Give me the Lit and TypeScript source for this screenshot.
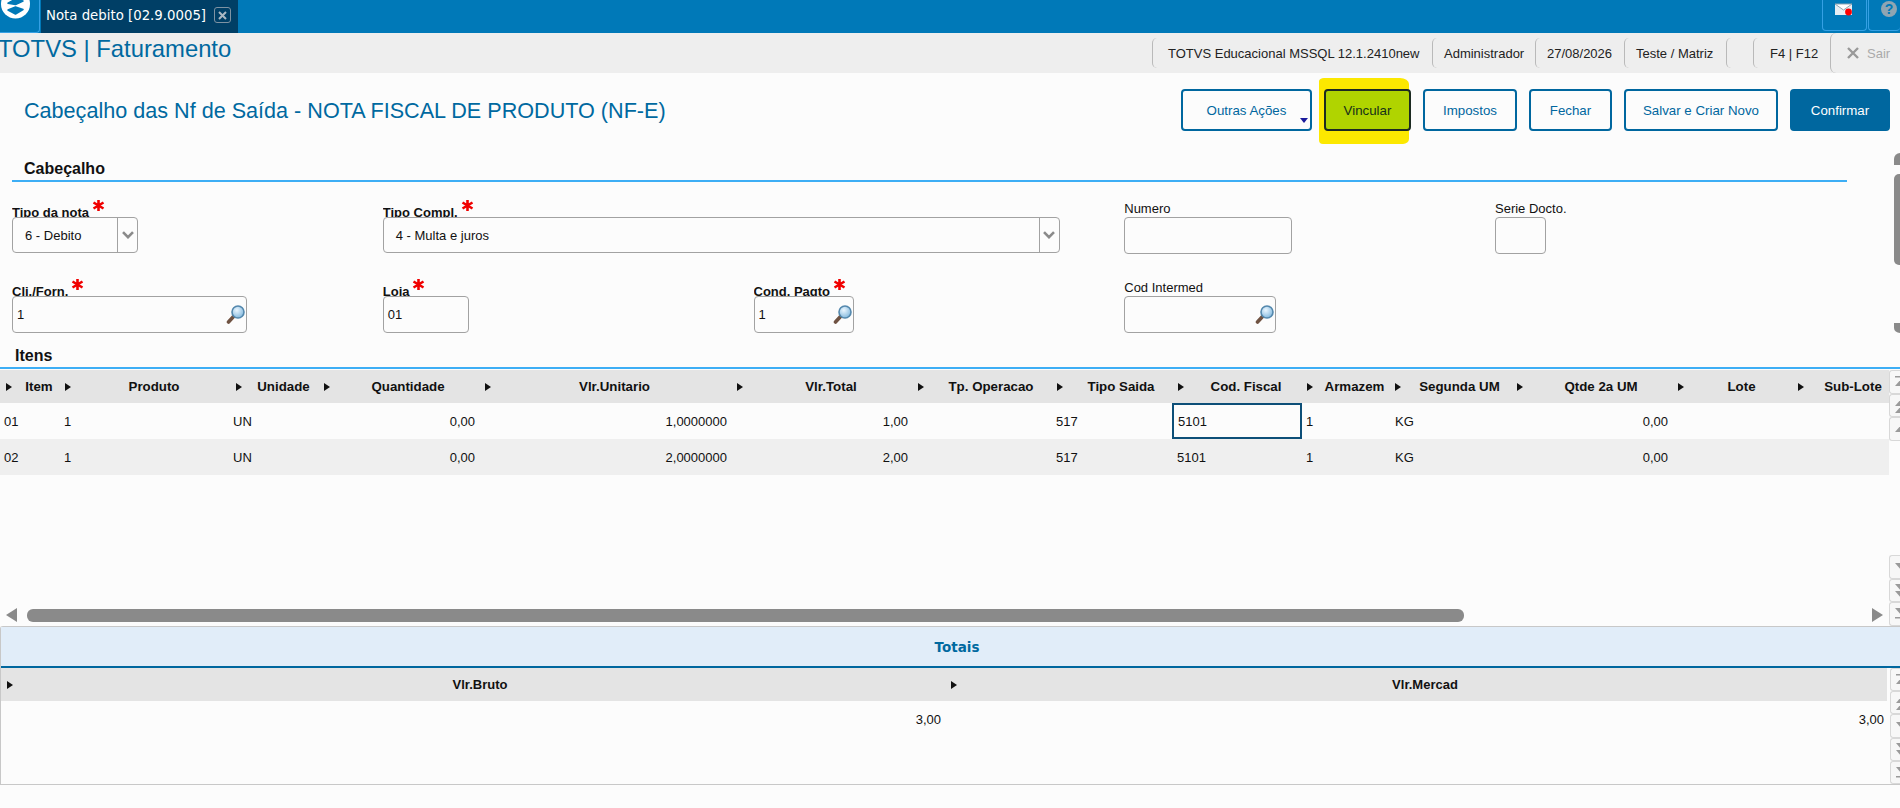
import { LitElement, html, css, svg } from "lit";
import { customElement } from "lit/decorators.js";

const HEAD = ["Item","Produto","Unidade","Quantidade","Vlr.Unitario","Vlr.Total","Tp. Operacao","Tipo Saida","Cod. Fiscal","Armazem","Segunda UM","Qtde 2a UM","Lote","Sub-Lote"];
const RIGHT = new Set([3,4,5,11]);
const ROWS = [
  ["01","1","UN","0,00","1,0000000","1,00","","517","5101","1","KG","0,00","",""],
  ["02","1","UN","0,00","2,0000000","2,00","","517","5101","1","KG","0,00","",""],
];

const tri = (y: number, up: boolean) =>
  up ? svg`<path d="M11 ${y}l6 7h-12z"/>` : svg`<path d="M5 ${y}h12l-6 7z"/>`;

const scrollBtn = (kind: string) => html`<div class="sbtn"><svg width="11" height="23" viewBox="0 0 11 23" fill="#9a9a9a">
  ${kind === "top" ? svg`<path d="M5 6h12v1.5h-12z"/>${tri(9, true)}` : ""}
  ${kind === "up2" ? svg`${tri(5, true)}${tri(12, true)}` : ""}
  ${kind === "up" ? svg`${tri(8, true)}` : ""}
  ${kind === "down" ? svg`${tri(8, false)}` : ""}
  ${kind === "down2" ? svg`${tri(5, false)}${tri(12, false)}` : ""}
  ${kind === "bottom" ? svg`${tri(6, false)}<path d="M5 15h12v1.5h-12z"/>` : ""}
</svg></div>`;

const lens = html`<svg class="lens" width="20" height="20" viewBox="0 0 20 20">
  <defs><radialGradient id="g" cx="40%" cy="35%" r="70%"><stop offset="0" stop-color="#eaf6ff"/><stop offset="1" stop-color="#7fb6dc"/></radialGradient></defs>
  <path d="M8 11L2.5 17" stroke="#6f5242" stroke-width="3.6" stroke-linecap="round"/>
  <circle cx="12" cy="7" r="6" fill="url(#g)" stroke="#5488ad" stroke-width="1.6"/>
</svg>`;

const star = html`<svg class="star" width="13" height="11" viewBox="0 0 13 11" fill="none" stroke="#f00000" stroke-width="2.6">
  <path d="M6.5 0v11M1.5 2.5l10 6M11.5 2.5l-10 6"/></svg>`;

const chev = html`<div class="chev"><svg width="12" height="8" viewBox="0 0 12 8" fill="none" stroke="#8a8a8a" stroke-width="2.6"><path d="M1 1.2l5 5 5-5"/></svg></div>`;

@customElement("app-root")
export class AppRoot extends LitElement {
  static styles = css`
    :host { display: block; width: 1900px; height: 808px; overflow: hidden; background: #fcfcfc;
      font-family: "Liberation Sans", Arial, sans-serif; font-size: 13px; color: #111; }
    .topbar { height: 33px; background: #0079b8; display: flex; }
    .logo { width: 39px; height: 32px; border-right: 1px solid #35a0e4; border-bottom: 1px solid #35a0e4; border-bottom-right-radius: 4px; overflow: hidden; }
    .logo svg { display: block; }
    .tab { width: 197px; margin-left: 1px; background: #003f66; color: #fff; display: flex; align-items: center;
      font: 13.3px "DejaVu Sans", sans-serif; padding: 0 0 3px 5px; box-sizing: border-box; gap: 8px; white-space: nowrap; }
    .close { width: 15px; height: 14px; flex: none; border: 1px solid #7f93a3; border-radius: 3px; display: flex; align-items: center; justify-content: center; }
    .spacer { flex: 1; }
    .tbtn { height: 31px; border: 1px solid #35a0e4; border-top: 0; border-radius: 0 0 4px 4px; box-sizing: border-box; overflow: hidden; }
    .mail { width: 45px; padding: 3px 0 0 12px; }
    .help { width: 32px; margin-left: 1px; padding: 1px 0 0 12px; border-right: 0; }
    .qm { width: 16px; height: 16px; border-radius: 50%; background: #8fa5b2; color: #0079b8; font: bold 14px/16px "Liberation Sans", sans-serif; text-align: center; }

    .head { height: 40px; background: #eeeeee; display: flex; align-items: center; }
    .brand { font-size: 23.8px; color: #0069a0; margin-left: -2px; margin-top: -8px; white-space: nowrap; }
    .status { margin-left: auto; display: flex; height: 40px; align-items: center; }
    .st { height: 30px; border-left: 1px solid #b9b9b9; border-radius: 5px 0 0 5px; box-sizing: border-box; padding-left: 11px;
      display: flex; align-items: center; white-space: nowrap; color: #222; }
    .st.sair { height: 40px; width: 70px; padding-left: 16px; color: #aaa; gap: 8px; border-radius: 6px 0 0 6px; }
    .w1 { width: 280px; padding-left: 15px; } .w2 { width: 103px; } .w3 { width: 89px; } .w4 { width: 102px; } .w5 { width: 27px; } .w6 { width: 77px; padding-left: 16px; }

    .titlerow { height: 80px; display: flex; box-sizing: border-box; padding: 16px 10px 0 24px; }
    .title { font-size: 21.6px; color: #0069a0; margin-top: 9px; white-space: nowrap; }
    .btns { margin-left: auto; display: flex; gap: 12px; height: 42px; font-size: 13.3px; }
    .btn { box-sizing: border-box; height: 42px; border: 2px solid #00679f; border-radius: 4px; color: #00679f; background: #fcfcfc;
      display: flex; align-items: center; justify-content: center; position: relative; }
    .btn.primary { background: #00679f; color: #fff; width: 100px; }
    .btn.vinc { background: #b0d400; border-color: #1c2a22; color: #15301a; width: 87px; z-index: 1; }
    .caret { position: absolute; right: 2px; bottom: 6px; width: 0; height: 0; border-left: 4.5px solid transparent; border-right: 4.5px solid transparent; border-top: 5px solid #1a1a9c; }
    .w131 { width: 131px; } .w94 { width: 94px; } .w83 { width: 83px; } .w154 { width: 154px; }
    .vwrap { position: relative; }
    .mark { position: absolute; left: -5px; top: -11px; width: 90px; height: 66px; background: #fce800; border-radius: 5px 9px 6px 4px / 3px 6px 5px 4px; }

    .upper { display: flex; height: 180px; }
    .umain { width: 1847px; padding-top: 7px; }
    .vbar { margin-left: auto; width: 6px; height: 180px; display: flex; flex-direction: column; overflow: hidden; }
    .vthumb { width: 6px; height: 91px; margin-top: 9px; background: #8a8a8a; border-radius: 5px 0 0 5px; }
    .varrow { width: 12px; height: 12px; background: #8a8a8a; border-radius: 50% 0 0 0; }
    .varrow.b { height: 10px; margin-top: 58px; border-radius: 0 0 0 50%; }
    .sec { font-weight: bold; font-size: 16px; line-height: 18px; height: 20px; border-bottom: 2px solid #3daef5; }
    .sec.c { margin-left: 12px; padding-left: 12px; }
    .form { display: grid; grid-template-columns: repeat(5, 370.75px); padding: 16px 0 0 12px; row-gap: 23px; }
    .span2 { grid-column: span 2; }
    .lab { height: 19px; display: flex; overflow: hidden; white-space: nowrap; align-items: flex-start; line-height: 14px; }
    .lab .t { padding-top: 4px; }
    .lab.req { font-weight: bold; }
    .lab.req .t { padding-top: 8px; }
    .star { margin: 2px 0 0 3px; flex: none; }
    .box { box-sizing: border-box; height: 37px; border: 1px solid #a2a2a2; border-radius: 4px; display: flex; align-items: center; background: #fcfcfc; padding-left: 4px; }
    .box.sel { height: 36px; padding-left: 0; }
    .box.sel .v { flex: 1; padding-left: 12px; }
    .box .v { flex: 1; }
    .chev { width: 19px; height: 100%; border-left: 1px solid #a2a2a2; display: flex; align-items: center; justify-content: center; }
    .lens { margin-right: 0; flex: none; }
    .f125 { width: 126px; } .f677 { width: 677px; } .f167 { width: 168px; } .f51 { width: 51px; }
    .f234 { width: 235px; } .f86 { width: 86px; } .f100 { width: 100px; } .f151 { width: 152px; }

    .itens { height: 36px; }
    .sec.i { padding: 13px 0 0 15px; height: 21px; line-height: 20px; }
    .area { display: flex; margin-top: 1px; height: 256px; }
    .amain { width: 1889px; display: flex; flex-direction: column; }
    .side { width: 11px; display: flex; flex-direction: column; overflow: hidden; }
    .side.sb { justify-content: space-between; }
    .sgroup { display: flex; flex-direction: column; }
    .sbtn { height: 23.7px; box-sizing: border-box; border: 1px solid #d8d8d8; border-right: 0; border-radius: 3px 0 0 3px; background: #f7f7f7; overflow: hidden; }
    .sbtn svg { display: block; margin-top: -1px; }
    .grid { flex: 1; overflow: hidden; }
    .tr { display: grid; grid-template-columns: 63px 171px 88px 161px 252px 181px 139px 121px 129px 88px 122px 161px 120px 103px; height: 36px; align-items: center; }
    .tr.h { height: 33px; background: #e4e4e4; font-weight: bold; font-size: 13.3px; }
    .tr.alt { background: #efefef; }
    .hc { display: flex; align-items: center; padding-left: 2px; white-space: nowrap; }
    .hc:first-child { padding-left: 6px; }
    .hc .n { flex: 1; text-align: center; padding-left: 3px; }
    .ar { flex: none; width: 0; height: 0; border-top: 4px solid transparent; border-bottom: 4px solid transparent; border-left: 6px solid #111; }
    .td { padding-left: 1px; white-space: nowrap; }
    .td:first-child { padding-left: 4px; }
    .td.r { text-align: right; padding: 0 8px 0 0; }
    .td:nth-child(3) { margin-left: -2px; }
    .td:nth-child(11) { padding-left: 2px; }
    .td.cur { margin: 0 3px 0 -4px; padding-left: 4px; height: 36px; box-sizing: border-box; border: 2px solid #0d4f78; line-height: 33px; }
    .hs { height: 22px; display: flex; align-items: center; }
    .la { width: 0; height: 0; margin-left: 6px; border-top: 7px solid transparent; border-bottom: 7px solid transparent; border-right: 11px solid #8a8a8a; }
    .hthumb { width: 1437px; height: 13px; margin-left: 10px; background: #8a8a8a; border-radius: 6px; }
    .ra { width: 0; height: 0; margin-left: auto; margin-right: 6px; border-top: 7px solid transparent; border-bottom: 7px solid transparent; border-left: 11px solid #8a8a8a; }

    .totais { height: 159px; box-sizing: border-box; border: 1px solid #c8c8c8; border-width: 1px 0 1px 1px; border-radius: 3px 0 0 0; }
    .tt { height: 39px; background: #e1edf9; border-bottom: 2px solid #00679f; font: bold 13.5px/40px "DejaVu Sans", sans-serif; color: #0069a0; text-align: center; padding-left: 13px; }
    .tbody { display: flex; }
    .tmain { width: 1886px; }
    .tside { margin-left: 3px; width: 10px; overflow: hidden; }
    .tside .sbtn { height: 23.2px; }
    .tr2 { display: grid; grid-template-columns: 948px 938px; height: 36px; align-items: center; }
    .tr2.h { height: 33px; background: #e4e4e4; font-weight: bold; }
    .tr2 .hc { padding-left: 6px; }
    .tr2 .hc .n { padding: 0 2px 0 0; }
    .tr2 .hc + .hc { padding-left: 2px; }
    .tr2 .hc + .hc .n { padding: 0 0 0 6px; }
    .tr2 .td.r { padding-right: 8px; margin: 0; }
    .tr2 .td:nth-child(2) { padding-right: 3px; }
  `;

  render() {
    return html`
      <div class="topbar">
        <div class="logo"><svg width="39" height="32" viewBox="0 0 39 32">
          <circle cx="15.5" cy="4" r="14.5" fill="#fff"/>
          <path d="M8 10L15.5 7l7.5 2.5-7.5 4.5z" fill="#0079b8" stroke="#0079b8" stroke-width="1.5" stroke-linejoin="round"/>
          <path d="M8 3.2L15.5 -1l7.5 2-7.5 3.6z" fill="#0079b8" stroke="#0079b8" stroke-width="1.5" stroke-linejoin="round"/>
        </svg></div>
        <div class="tab">Nota debito [02.9.0005]<div class="close"><svg width="9" height="9" viewBox="0 0 9 9" stroke="#aab8c3" stroke-width="2"><path d="M1 1l7 7M8 1l-7 7"/></svg></div></div>
        <div class="spacer"></div>
        <div class="tbtn mail"><svg width="18" height="13" viewBox="0 0 18 13">
          <rect y="1" width="17" height="11" fill="#e6edf3"/><path d="M0 1l8.5 6L17 1z" fill="#fff" stroke="#8fa5b2"/><circle cx="13.5" cy="9" r="3.4" fill="#f00"/></svg></div>
        <div class="tbtn help"><div class="qm">?</div></div>
      </div>
      <div class="head">
        <div class="brand">TOTVS | Faturamento</div>
        <div class="status">
          <div class="st w1">TOTVS Educacional MSSQL 12.1.2410new</div>
          <div class="st w2">Administrador</div>
          <div class="st w3">27/08/2026</div>
          <div class="st w4">Teste / Matriz</div>
          <div class="st w5"></div>
          <div class="st w6">F4 | F12</div>
          <div class="st sair"><svg width="12" height="12" viewBox="0 0 12 12" stroke="#999" stroke-width="2.4"><path d="M1 1l10 10M11 1l-10 10"/></svg>Sair</div>
        </div>
      </div>
      <div class="titlerow">
        <div class="title">Cabeçalho das Nf de Saída - NOTA FISCAL DE PRODUTO (NF-E)</div>
        <div class="btns">
          <div class="btn w131">Outras Ações<span class="caret"></span></div>
          <div class="vwrap"><div class="mark"></div><div class="btn vinc">Vincular</div></div>
          <div class="btn w94">Impostos</div>
          <div class="btn w83">Fechar</div>
          <div class="btn w154">Salvar e Criar Novo</div>
          <div class="btn primary">Confirmar</div>
        </div>
      </div>
      <div class="upper">
        <div class="umain">
          <div class="sec c">Cabeçalho</div>
          <div class="form">
            <div><div class="lab req"><span class="t">Tipo da nota</span>${star}</div>
              <div class="box sel f125"><span class="v">6 - Debito</span>${chev}</div></div>
            <div class="span2"><div class="lab req"><span class="t">Tipo Compl.</span>${star}</div>
              <div class="box sel f677"><span class="v">4 - Multa e juros</span>${chev}</div></div>
            <div><div class="lab"><span class="t">Numero</span></div><div class="box f167"></div></div>
            <div><div class="lab"><span class="t">Serie Docto.</span></div><div class="box f51"></div></div>

            <div><div class="lab req"><span class="t">Cli./Forn.</span>${star}</div>
              <div class="box f234"><span class="v">1</span>${lens}</div></div>
            <div><div class="lab req"><span class="t">Loja</span>${star}</div>
              <div class="box f86"><span class="v">01</span></div></div>
            <div><div class="lab req"><span class="t">Cond. Pagto</span>${star}</div>
              <div class="box f100"><span class="v">1</span>${lens}</div></div>
            <div><div class="lab"><span class="t">Cod Intermed</span></div>
              <div class="box f151"><span class="v"></span>${lens}</div></div>
          </div>
        </div>
        <div class="vbar"><div class="varrow"></div><div class="vthumb"></div><div class="varrow b"></div></div>
      </div>
      <div class="itens"><div class="sec i">Itens</div></div>
      <div class="area">
        <div class="amain">
          <div class="grid">
            <div class="tr h">${HEAD.map((h) => html`<div class="hc"><span class="ar"></span><span class="n">${h}</span></div>`)}</div>
            ${ROWS.map((r, i) => html`<div class="tr ${i ? "alt" : ""}">
              ${r.map((c, j) => html`<div class="td ${RIGHT.has(j) ? "r" : ""} ${i === 0 && j === 8 ? "cur" : ""}">${c}</div>`)}
            </div>`)}
          </div>
          <div class="hs"><span class="la"></span><div class="hthumb"></div><span class="ra"></span></div>
        </div>
        <div class="side sb">
          <div class="sgroup">${scrollBtn("top")}${scrollBtn("up2")}${scrollBtn("up")}</div>
          <div class="sgroup">${scrollBtn("down")}${scrollBtn("down2")}${scrollBtn("bottom")}</div>
        </div>
      </div>
      <div class="totais">
        <div class="tt">Totais</div>
        <div class="tbody">
          <div class="tmain">
            <div class="tr2 h">
              <div class="hc"><span class="ar"></span><span class="n">Vlr.Bruto</span></div>
              <div class="hc"><span class="ar"></span><span class="n">Vlr.Mercad</span></div>
            </div>
            <div class="tr2"><div class="td r">3,00</div><div class="td r">3,00</div></div>
          </div>
          <div class="tside">${scrollBtn("top")}${scrollBtn("up2")}${scrollBtn("down")}${scrollBtn("down2")}${scrollBtn("bottom")}</div>
        </div>
      </div>
    `;
  }
}
